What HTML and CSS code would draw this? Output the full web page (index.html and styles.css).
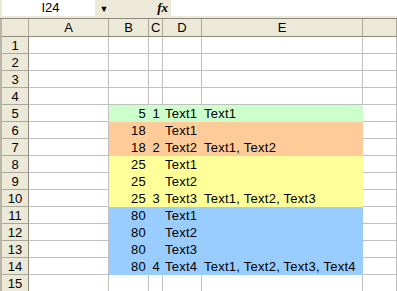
FILE: index.html
```html
<!DOCTYPE html>
<html lang="en">
<head>
  <meta charset="UTF-8" />
  <title>Sheet1</title>
  <link rel="stylesheet" href="styles.css">
</head>
<body>
  <div class="formula-bar">
    <div class="name-box">I24</div>
    <div class="name-drop">&#9660;</div>
    <div class="fx">fx</div>
    <div class="formula-input"></div>
  </div>
  <table class="sheet">
    <colgroup>
      <col class="c-hdr"><col class="c-a"><col class="c-b"><col class="c-c"><col class="c-d"><col class="c-e"><col class="c-f">
    </colgroup>
    <thead>
      <tr>
        <th class="corner"></th><th>A</th><th>B</th><th>C</th><th>D</th><th>E</th><th></th>
      </tr>
    </thead>
    <tbody>
      <tr><th>1</th><td></td><td></td><td></td><td></td><td></td><td></td></tr>
      <tr><th>2</th><td></td><td></td><td></td><td></td><td></td><td></td></tr>
      <tr><th>3</th><td></td><td></td><td></td><td></td><td></td><td></td></tr>
      <tr><th>4</th><td></td><td></td><td></td><td></td><td></td><td></td></tr>
      <tr class="green"><th>5</th><td class="blank"></td><td class="num">5</td><td class="num">1</td><td>Text1</td><td>Text1</td><td class="blank"></td></tr>
      <tr class="orange"><th>6</th><td class="blank"></td><td class="num">18</td><td class="num"></td><td>Text1</td><td></td><td class="blank"></td></tr>
      <tr class="orange"><th>7</th><td class="blank"></td><td class="num">18</td><td class="num">2</td><td>Text2</td><td>Text1, Text2</td><td class="blank"></td></tr>
      <tr class="yellow"><th>8</th><td class="blank"></td><td class="num">25</td><td class="num"></td><td>Text1</td><td></td><td class="blank"></td></tr>
      <tr class="yellow"><th>9</th><td class="blank"></td><td class="num">25</td><td class="num"></td><td>Text2</td><td></td><td class="blank"></td></tr>
      <tr class="yellow"><th>10</th><td class="blank"></td><td class="num">25</td><td class="num">3</td><td>Text3</td><td>Text1, Text2, Text3</td><td class="blank"></td></tr>
      <tr class="blue"><th>11</th><td class="blank"></td><td class="num">80</td><td class="num"></td><td>Text1</td><td></td><td class="blank"></td></tr>
      <tr class="blue"><th>12</th><td class="blank"></td><td class="num">80</td><td class="num"></td><td>Text2</td><td></td><td class="blank"></td></tr>
      <tr class="blue"><th>13</th><td class="blank"></td><td class="num">80</td><td class="num"></td><td>Text3</td><td></td><td class="blank"></td></tr>
      <tr class="blue"><th>14</th><td class="blank"></td><td class="num">80</td><td class="num">4</td><td>Text4</td><td>Text1, Text2, Text3, Text4</td><td class="blank"></td></tr>
      <tr><th>15</th><td></td><td></td><td></td><td></td><td></td><td></td></tr>
    </tbody>
  </table>
</body>
</html>
```

FILE: styles.css
```css
html, body {
  margin: 0;
  padding: 0;
  overflow: hidden;
  background: #ffffff;
  font-family: 'Liberation Sans', Arial, sans-serif;
  font-size: 13px;
  color: #000;
}

/* Formula bar */
.formula-bar {
  display: flex;
  height: 19px;
  background: #ece9d8;
  border-bottom: 1px solid #8d8a7d;
  padding-left: 2px;
  box-sizing: border-box;
}
.name-box {
  width: 93px;
  height: 16px;
  background: #fff;
  text-align: center;
  line-height: 16px;
  box-sizing: border-box;
  padding-left: 4px;
}
.name-drop {
  width: 18px;
  height: 16px;
  font-size: 9px;
  line-height: 19px;
  text-align: center;
  color: #000;
}
.fx {
  width: 58px;
  height: 16px;
  text-align: right;
  padding-right: 3px;
  box-sizing: border-box;
  font-family: 'Liberation Serif', serif;
  font-style: italic;
  font-weight: bold;
  font-size: 13px;
  line-height: 16px;
}
.formula-input {
  flex: 1;
  height: 16px;
  background: #fff;
}

/* Sheet grid */
.sheet {
  border-collapse: separate;
  border-spacing: 0;
  table-layout: fixed;
  width: 397px;
  border-left: 2px solid #b9b6a8;
}
.c-hdr { width: 27px; }
.c-a { width: 80px; }
.c-b { width: 40px; }
.c-c { width: 14px; }
.c-d { width: 39px; }
.c-e { width: 161px; }
.c-f { width: 34px; }

.sheet th,
.sheet td {
  height: 17px;
  padding: 0 2px;
  box-sizing: border-box;
  border-right: 1px solid #c0c0c0;
  border-bottom: 1px solid #c0c0c0;
  white-space: nowrap;
  overflow: hidden;
  line-height: 15px;
  vertical-align: bottom;
  font-weight: normal;
}
.sheet td {
  letter-spacing: 0.25px;
}
.sheet thead th {
  background: #ece9d8;
  text-align: center;
  border-right: 1px solid #aca899;
  border-bottom: 1px solid #8d8a7d;
  height: 18px;
  vertical-align: middle;
}
.sheet tbody th {
  background: #ece9d8;
  text-align: center;
  border-right: 1px solid #8d8a7d;
  border-bottom: 1px solid #aca899;
  vertical-align: middle;
  padding: 0;
}
.sheet td.num {
  text-align: right;
}

/* Filled ranges hide their own gridlines */
.green td { background: #ccffcc; border-color: #ccffcc; }
.orange td { background: #ffcc99; border-color: #ffcc99; }
.yellow td { background: #ffff99; border-color: #ffff99; }
.blue td { background: #99ccff; border-color: #99ccff; }
.sheet tr td.blank {
  background: #fff;
  border-right-color: #c0c0c0;
  border-bottom-color: #c0c0c0;
}
```
